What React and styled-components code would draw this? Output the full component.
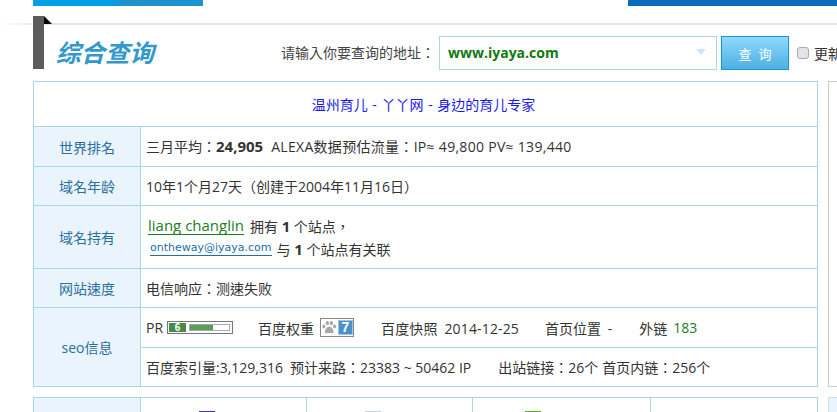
import React from "react";
import styled, { createGlobalStyle } from "styled-components";

const GlobalStyle = createGlobalStyle`
    html, body {
        margin: 0;
        padding: 0;
        background: #fff;
    }
    body {
        font-family: "Open Sans", "Noto Sans CJK TC", sans-serif;
        font-size: 14px;
        color: #333;
    }
`;

const Page = styled.div`
    position: relative;
    width: 837px;
    height: 412px;
    overflow: hidden;
`;

const Banners = styled.div`
    display: flex;
    justify-content: space-between;
    padding-left: 33px;
    height: 6px;
`;
const BannerLeft = styled.div`
    width: 170px;
    background: linear-gradient(90deg, #00a0e6 0%, #00a0e6 45%, #2191c9 55%, #1a94d0 100%);
`;
const BannerRight = styled.div`
    width: 209px;
    background: #0a6abb;
`;

const Rule = styled.div`
    margin-top: 17px;
    height: 2px;
    background: linear-gradient(90deg, #fff 0, #e6e6e6 40px, #e6e6e6 100%);
`;

const Ribbon = styled.div`
    position: absolute;
    left: 33px;
    top: 16px;
    width: 11px;
    height: 53px;
    background: #5c5c5c;
    &::after {
        content: "";
        position: absolute;
        left: 11px;
        top: 0;
        border-top: 8px solid transparent;
        border-left: 8px solid #000;
    }
`;

const SearchBar = styled.div`
    display: flex;
    align-items: center;
    height: 34px;
    margin-top: 11px;
    padding-left: 56px;
    white-space: nowrap;
`;
const Title = styled.h1`
    margin: 0;
    width: 225px;
    flex: none;
    font-size: 24.5px;
    line-height: 34px;
    font-weight: 700;
    font-style: italic;
    color: #3399cc;
`;
const Prompt = styled.label`
    width: 158px;
    flex: none;
    margin-top: -2px;
    color: #444;
`;
const AddressBox = styled.div`
    flex: none;
    display: flex;
    align-items: center;
    justify-content: space-between;
    box-sizing: border-box;
    width: 278px;
    height: 34px;
    padding: 0 10px 2px 8px;
    border: 1px solid #add6e4;
    font-size: 14px;
    font-weight: 700;
    color: #0f7a0f;
`;
const Caret = styled.span`
    width: 0;
    height: 0;
    border-left: 5px solid transparent;
    border-right: 5px solid transparent;
    border-top: 6px solid #cde8f4;
`;
const QueryButton = styled.button`
    flex: none;
    box-sizing: border-box;
    width: 68px;
    height: 34px;
    margin-left: 4px;
    padding: 0;
    border: 1px solid #1498d8;
    background: linear-gradient(180deg, #8fd9ff 0%, #4cb0e2 100%);
    color: #fff;
    font-family: inherit;
    font-size: 13px;
    letter-spacing: 7px;
    text-indent: 7px;
`;
const Refresh = styled.label`
    flex: none;
    display: flex;
    align-items: center;
    gap: 5px;
    margin-left: 8px;
`;
const Check = styled.input`
    appearance: none;
    box-sizing: border-box;
    width: 12px;
    height: 12px;
    margin: 0;
    border: 1px solid #aaa;
    border-radius: 3px;
    background: #e4e4e4;
`;

const Columns = styled.div`
    display: flex;
    gap: 10px;
    margin-top: 11px;
    padding-left: 33px;
`;
const Main = styled.div`
    flex: none;
    width: 785px;
`;
const Side = styled.div`
    flex: none;
    width: 60px;
`;
const SideBox = styled.div`
    box-sizing: border-box;
    height: 306px;
    border: 1px solid #ccc;
`;
const SideBoxBlue = styled.div`
    height: 40px;
    margin-top: 10px;
    border-top: 1px solid #c8dfe8;
    border-left: 1px solid #c8dfe8;
    background: #eaf4fc;
`;

const InfoTable = styled.div`
    box-sizing: border-box;
    border: 1px solid #a8d8e4;
`;
const Banner = styled.div`
    display: flex;
    align-items: center;
    justify-content: center;
    height: 44px;
    padding-right: 4px;
    word-spacing: 1px;
    color: #1a1aee;
`;
const Row = styled.div`
    display: flex;
    height: ${(p) => p.$h}px;
    border-top: 1px solid #a8d8e4;
`;
const Label = styled.div`
    flex: none;
    display: flex;
    align-items: center;
    justify-content: center;
    box-sizing: border-box;
    width: 107px;
    border-right: 1px solid #a8d8e4;
    background: #eaf4fc;
    color: #2a6f9e;
`;
const Cell = styled.div`
    flex: 1;
    display: flex;
    align-items: center;
    padding-left: 5px;
    padding-bottom: ${(p) => p.$pb ?? 0}px;
    white-space: nowrap;
    color: #333;
`;
const Stack = styled.div`
    flex: 1;
    display: flex;
    flex-direction: column;
`;
const StackLine = styled(Cell)`
    flex: none;
    height: ${(p) => p.$h}px;
    & + & {
        border-top: 1px solid #a8d8e4;
    }
`;
const OwnerCell = styled.div`
    flex: 1;
    padding: 9px 0 0 7px;
    white-space: nowrap;
`;
const OwnerLine = styled.div`
    display: flex;
    align-items: center;
    height: ${(p) => p.$h}px;
    gap: ${(p) => p.$gap}px;
`;
const OwnerName = styled.a`
    font-size: 15px;
    line-height: 17px;
    color: #1c7d1c;
    border-bottom: 1px solid #1c7d1c;
`;
const Email = styled.a`
    margin-left: 2px;
    font-family: "DejaVu Sans", sans-serif;
    font-size: 11px;
    line-height: 14px;
    color: #2070a8;
    border-bottom: 1px solid #2070a8;
`;
const Num = styled.b`
    font-size: 15px;
    font-weight: 700;
`;
const Item = styled.span`
    display: inline-flex;
    align-items: center;
    gap: ${(p) => p.$gap ?? 6}px;
    margin-left: ${(p) => p.$ml ?? 0}px;
    margin-right: ${(p) => p.$mr ?? 0}px;
    word-spacing: ${(p) => p.$ws ?? 0}px;
    letter-spacing: ${(p) => p.$ls ?? 0}px;
`;
const Green = styled.span`
    color: #1c7d1c;
`;

const PrBox = styled.span`
    display: inline-flex;
    align-items: center;
    gap: 3px;
    box-sizing: border-box;
    width: 66px;
    height: 13px;
    padding: 0 2px 0 1px;
    border: 1px solid #777;
`;
const PrNum = styled.span`
    width: 17px;
    height: 9px;
    background: #4a8a48;
    color: #fff;
    font-family: "Liberation Sans", sans-serif;
    font-size: 10px;
    font-weight: 700;
    line-height: 9px;
    text-align: center;
`;
const PrTrack = styled.span`
    flex: 1;
    height: 5px;
    border: 1px solid #aaa;
`;
const PrFill = styled.span`
    display: block;
    height: 100%;
    background: #5a9e58;
`;
const WeightBox = styled.span`
    display: inline-flex;
    align-items: center;
    gap: 1px;
    box-sizing: border-box;
    width: 34px;
    height: 19px;
    padding-left: 1px;
    border: 1px solid #888;
`;
const WeightNum = styled.span`
    width: 16px;
    height: 15px;
    background: #4a90cc;
    border: 1px solid #9cc6e8;
    box-sizing: border-box;
    color: #fff;
    font-family: "Liberation Sans", sans-serif;
    font-size: 14px;
    font-weight: 700;
    line-height: 13px;
    text-align: center;
`;

const LowerTable = styled.div`
    display: flex;
    height: 40px;
    margin-top: 10px;
    border: 1px solid #a8d8e4;
    border-bottom: 0;
`;
const LowerLabel = styled.div`
    flex: none;
    box-sizing: border-box;
    width: 107px;
    border-right: 1px solid #a8d8e4;
    background: #eaf4fc;
`;
const LowerCell = styled.div`
    flex: none;
    box-sizing: border-box;
    width: ${(p) => p.$w}px;
    padding-left: ${(p) => p.$pad}px;
    border-right: ${(p) => (p.$last ? "0" : "1px solid #a8d8e4")};
`;
const Tick = styled.div`
    width: 16px;
    height: 2px;
    margin-top: 13px;
    background: ${(p) => p.$color};
`;

const Paw = () => (
    <svg width="15" height="15" viewBox="0 0 15 15" fill="#a8a8a8">
        <ellipse cx="2" cy="6.5" rx="1.6" ry="2" />
        <ellipse cx="5.5" cy="3" rx="1.7" ry="2.2" />
        <ellipse cx="9.7" cy="3" rx="1.7" ry="2.2" />
        <ellipse cx="13" cy="6.5" rx="1.6" ry="2" />
        <path d="M7.5 6.5c-2 0-4.5 3-4.5 5.3 0 1.5 1.2 1.9 2.2 1.7.9-.2 1.5-.3 2.3-.3s1.4.1 2.3.3c1 .2 2.2-.2 2.2-1.7 0-2.3-2.5-5.3-4.5-5.3z" />
    </svg>
);

const App = () => {
    return (
        <Page>
            <GlobalStyle />
            <Banners>
                <BannerLeft />
                <BannerRight />
            </Banners>
            <Rule />
            <Ribbon />
            <SearchBar>
                <Title>综合查询</Title>
                <Prompt>请输入你要查询的地址：</Prompt>
                <AddressBox>
                    www.iyaya.com
                    <Caret />
                </AddressBox>
                <QueryButton>查询</QueryButton>
                <Refresh>
                    <Check type="checkbox" />
                    更新
                </Refresh>
            </SearchBar>
            <Columns>
                <Main>
                    <InfoTable>
                        <Banner>温州育儿 - 丫丫网 - 身边的育儿专家</Banner>
                        <Row $h={39}>
                            <Label>世界排名</Label>
                            <Cell $pb={2}>
                                三月平均：<Num>24,905</Num>
                                <Item $gap={0} $ml={8} $ls={0.3}>ALEXA数据预估流量：IP≈ 49,800 PV≈ 139,440</Item>
                            </Cell>
                        </Row>
                        <Row $h={38}>
                            <Label>域名年龄</Label>
                            <Cell>10年1个月27天（创建于2004年11月16日）</Cell>
                        </Row>
                        <Row $h={62}>
                            <Label>域名持有</Label>
                            <OwnerCell>
                                <OwnerLine $h={22} $gap={6}>
                                    <OwnerName>liang changlin</OwnerName>
                                    <span>拥有 <Num>1</Num> 个站点，</span>
                                </OwnerLine>
                                <OwnerLine $h={23} $gap={5}>
                                    <Email>ontheway@iyaya.com</Email>
                                    <span>与 <Num>1</Num> 个站点有关联</span>
                                </OwnerLine>
                            </OwnerCell>
                        </Row>
                        <Row $h={38}>
                            <Label>网站速度</Label>
                            <Cell>电信响应：测速失败</Cell>
                        </Row>
                        <Row $h={78}>
                            <Label>seo信息</Label>
                            <Stack>
                                <StackLine $h={39}>
                                    <Item $gap={4} $mr={25}>
                                        PR
                                        <PrBox>
                                            <PrNum>6</PrNum>
                                            <PrTrack>
                                                <PrFill style={{ width: "60%" }} />
                                            </PrTrack>
                                        </PrBox>
                                    </Item>
                                    <Item $gap={6} $mr={27}>
                                        百度权重
                                        <WeightBox>
                                            <Paw />
                                            <WeightNum>7</WeightNum>
                                        </WeightBox>
                                    </Item>
                                    <Item $mr={26} $ws={3} $ls={0.15}>百度快照 2014-12-25</Item>
                                    <Item $mr={27} $ws={3}>首页位置 -</Item>
                                    <Item>外链 <Green>183</Green></Item>
                                </StackLine>
                                <StackLine $h={38}>
                                    <Item $mr={7}>百度索引量:3,129,316</Item>
                                    <Item $mr={27}>预计来路：23383 ~ 50462 IP</Item>
                                    <Item $mr={4}>出站链接：26个</Item>
                                    <Item>首页内链：256个</Item>
                                </StackLine>
                            </Stack>
                        </Row>
                    </InfoTable>
                    <LowerTable>
                        <LowerLabel />
                        <LowerCell $w={166} $pad={58}><Tick $color="#3a2fe0" /></LowerCell>
                        <LowerCell $w={166} $pad={58}><Tick $color="#c4d4e0" /></LowerCell>
                        <LowerCell $w={178} $pad={52}><Tick $color="#44c000" /></LowerCell>
                        <LowerCell $w={166} $last />
                    </LowerTable>
                </Main>
                <Side>
                    <SideBox />
                    <SideBoxBlue />
                </Side>
            </Columns>
        </Page>
    );
};

export default App;
